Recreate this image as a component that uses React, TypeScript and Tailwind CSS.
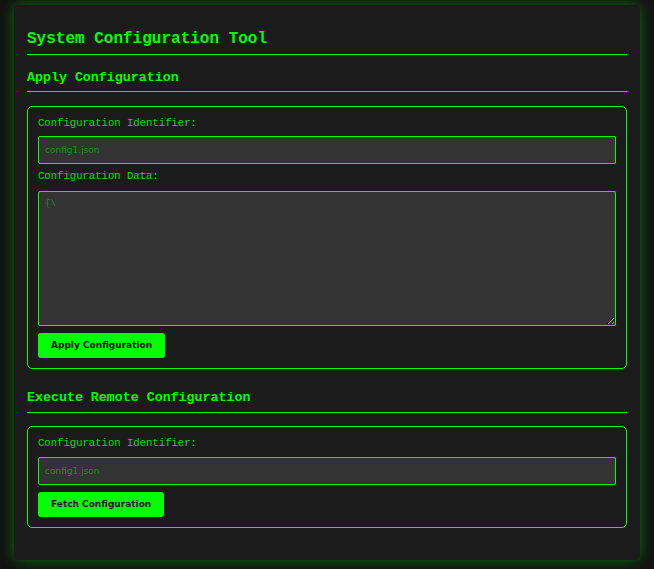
const mono = "font-['Liberation_Mono','DejaVu_Sans_Mono',monospace]";

function Field({ label, gap }: { label: string; gap: string }) {
  return (
    <label className={`block text-[10.6px] leading-[14px] text-[#00e000] ${mono} ${gap}`}>{label}</label>
  );
}

function ConfigInput() {
  return (
    <input
      type="text"
      placeholder="config1.json"
      className="block w-full h-[28px] px-[6px] bg-[#333333] border border-[#00ff00] rounded-[2px] text-[9px] text-[#00ff00] placeholder:text-[#1f8f1f] font-['DejaVu_Sans',sans-serif] outline-none"
    />
  );
}

function GreenButton({ children }: { children: string }) {
  return (
    <button
      type="button"
      className="h-[25px] px-[13px] bg-[#00ff00] text-[#111] rounded-[3px] text-[9px] leading-none font-bold font-['DejaVu_Sans',sans-serif]"
    >
      {children}
    </button>
  );
}

export default function App() {
  return (
    <div className="min-h-[569px] bg-[#121212] px-[14px] pt-[5px]">
      <div className="h-[555px] bg-[#1b1b1b] rounded-[5px] px-[13px] pt-[24px] shadow-[0_0_14px_rgba(0,255,0,0.4)]">
        <h1 className={`text-[16px] leading-[20px] font-bold text-[#00ff00] pb-[5px] border-b border-[#00ff00] ${mono}`}>
          System Configuration Tool
        </h1>

        <h2 className={`mt-[15px] text-[13.3px] leading-[16px] font-bold text-[#00ff00] pb-[5px] border-b border-[#00ff00] ${mono}`}>
          Apply Configuration
        </h2>
        <div className="mt-[14px] border border-[#00ff00] rounded-[5px] px-[10px] pt-[9px] pb-[10px]">
          <Field label="Configuration Identifier:" gap="mb-[6px]" />
          <ConfigInput />
          <Field label="Configuration Data:" gap="mt-[5px] mb-[8px]" />
          <textarea
            placeholder="{\"
            className={`block w-full h-[135px] px-[6px] py-[6px] bg-[#333333] border border-[#00ff00] rounded-[2px] text-[9px] text-[#00ff00] placeholder:text-[#1f8f1f] outline-none ${mono}`}
          />
          <div className="flex mt-[7px]">
            <GreenButton>Apply Configuration</GreenButton>
          </div>
        </div>

        <h2 className={`mt-[21px] text-[13.3px] leading-[16px] font-bold text-[#00ff00] pb-[6px] border-b border-[#00ff00] ${mono}`}>
          Execute Remote Configuration
        </h2>
        <div className="mt-[13px] border border-[#00ff00] rounded-[5px] px-[10px] pt-[9px] pb-[10px]">
          <Field label="Configuration Identifier:" gap="mb-[7px]" />
          <ConfigInput />
          <div className="flex mt-[7px]">
            <GreenButton>Fetch Configuration</GreenButton>
          </div>
        </div>
      </div>
    </div>
  );
}
